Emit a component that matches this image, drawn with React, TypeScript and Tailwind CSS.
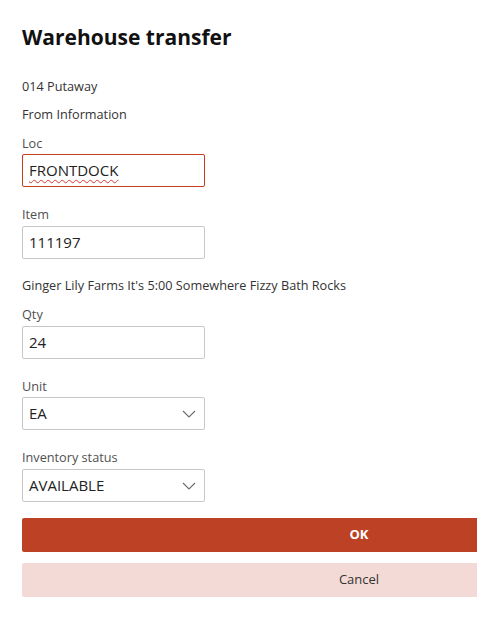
import React from "react";

function Chevron() {
  return (
    <svg width="14" height="8" viewBox="0 0 14 8" className="shrink-0">
      <path d="M1 1 L7 7 L13 1" fill="none" stroke="#6b6b6b" strokeWidth="1.1" />
    </svg>
  );
}

function Label({ children, className = "" }: { children: React.ReactNode; className?: string }) {
  return <div className={`h-[20px] leading-[20px] text-[12.7px] text-[#505050] ${className}`}>{children}</div>;
}

export default function App() {
  return (
    <div
      className="w-[477px] h-[636px] overflow-hidden bg-white pl-[22px] pt-[23px]"
      style={{ fontFamily: '"Open Sans", "Noto Sans", sans-serif' }}
    >
      <h1 className="h-[28px] leading-[28px] text-[21px] font-bold text-[#111]">Warehouse transfer</h1>
      <div className="mt-[25px] h-[20px] leading-[20px] text-[12.7px] text-[#333]">014 Putaway</div>
      <div className="mt-[8px] h-[20px] leading-[20px] text-[12.7px] text-[#333]">From Information</div>

      <Label className="mt-[9px]">Loc</Label>
      <div className="mt-[1px] w-[183px] h-[33px] border border-[#c43e1c] rounded-[2px] flex items-center px-[6px] text-[15px] text-[#222]">
        <span className="underline decoration-wavy decoration-[#d33] decoration-1 underline-offset-[3px]">FRONTDOCK</span>
      </div>

      <Label className="mt-[17px]">Item</Label>
      <div className="mt-[2px] w-[183px] h-[33px] border border-[#c8c8c8] rounded-[2px] flex items-center px-[6px] text-[15px] text-[#222]">
        111197
      </div>

      <div className="mt-[16px] h-[20px] leading-[20px] text-[12.7px] text-[#333]">
        Ginger Lily Farms It's 5:00 Somewhere Fizzy Bath Rocks
      </div>

      <Label className="mt-[9px]">Qty</Label>
      <div className="mt-[2px] w-[183px] h-[33px] border border-[#c8c8c8] rounded-[2px] flex items-center px-[6px] text-[15px] text-[#222]">
        24
      </div>

      <Label className="mt-[17px]">Unit</Label>
      <div className="mt-[1px] w-[183px] h-[33px] border border-[#c8c8c8] rounded-[2px] flex items-center justify-between pl-[6px] pr-[8px] text-[15px] text-[#222]">
        <span>EA</span>
        <Chevron />
      </div>

      <Label className="mt-[17px]">Inventory status</Label>
      <div className="mt-[2px] w-[183px] h-[33px] border border-[#c8c8c8] rounded-[2px] flex items-center justify-between pl-[6px] pr-[8px] text-[15px] text-[#222]">
        <span>AVAILABLE</span>
        <Chevron />
      </div>

      <button className="mt-[16px] block w-[674px] h-[34px] rounded-[2px] bg-[#bc4125] text-white text-[13px] font-bold">
        OK
      </button>
      <button className="mt-[11px] block w-[674px] h-[34px] rounded-[2px] bg-[#f3dad6] text-[#333] text-[13px]">
        Cancel
      </button>
    </div>
  );
}
